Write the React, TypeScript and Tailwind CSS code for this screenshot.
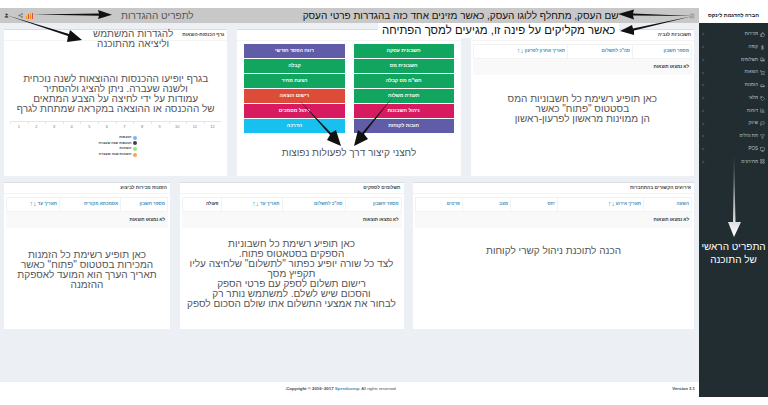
import React from 'react'
import {
  ThumbsUp,
  DollarSign,
  Truck,
  ShoppingCart,
  Car,
  Tag,
  BarChart3,
  Flag,
  Filter,
  Monitor,
  LayoutGrid,
  ChevronLeft,
  User,
  Share2,
  Menu,
} from 'lucide-react'

const menuItems = [
  { label: 'מכירות', Icon: ThumbsUp },
  { label: 'קופה', Icon: DollarSign },
  { label: 'תשלומים', Icon: Truck },
  { label: 'הוצאות', Icon: ShoppingCart },
  { label: 'הזמנות', Icon: Car },
  { label: 'מלאי', Icon: Tag },
  { label: 'דוחות', Icon: BarChart3 },
  { label: 'שיווק', Icon: Flag },
  { label: 'תת נהלים', Icon: Filter },
  { label: 'POS', Icon: Monitor },
  { label: 'מחירונים', Icon: LayoutGrid },
]

type Head = { label: string; sort?: boolean; dark?: boolean }

function DataTable({ cols, heads }: { cols: string; heads: Head[] }) {
  return (
    <div className="mx-[2px] mt-[3px]">
      <div className={`grid h-[15px] border border-[#f2f2f2] ${cols}`}>
        {heads.map((h) => (
          <div
            key={h.label}
            className={`flex items-center gap-[1px] border-l border-[#f2f2f2] px-[2px] text-[4.5px] font-bold last:border-l-0 ${h.dark ? 'text-[#333]' : 'text-[#3c8dbc]'}`}
          >
            <span>{h.label}</span>
            {h.sort && <span className="-mt-[2px] text-[7px] leading-none">↓↑</span>}
          </div>
        ))}
      </div>
      <div className="flex h-[16px] items-center bg-[#f9f9f9] px-[3px] text-[4.5px] font-bold text-[#333]">
        לא נמצאו תוצאות
      </div>
    </div>
  )
}

function Card({ title, children }: { title: string; children: React.ReactNode }) {
  return (
    <div className="h-[146.5px] overflow-hidden border-t border-[#d8dde3] bg-white">
      <div className="flex h-[11px] items-center border-b border-[#f4f4f4] px-[3px] text-[4.7px] font-bold text-[#444]">
        {title}
      </div>
      {children}
    </div>
  )
}

function Note({ className, children }: { className: string; children: React.ReactNode }) {
  return <div className={`text-center text-[10px] leading-[10px] text-[#555] ${className}`}>{children}</div>
}

const chartLegend = [
  { label: 'הכנסות', color: 'bg-[#7cb5ec]' },
  { label: 'הכנסות שנה שעברה', color: 'bg-[#434348]' },
  { label: 'הוצאות', color: 'bg-[#90ed7d]' },
  { label: 'הוצאות שנה שעברה', color: 'bg-[#f7a35c]' },
]

function ChartCard() {
  return (
    <Card title="גרף הכנסות-הוצאות">
      <Note className="mt-[33px]">
        בגרף יופיעו ההכנסות וההוצאות לשנה נוכחית
        <br />
        ולשנה שעברה. ניתן להציג ולהסתיר
        <br />
        עמודות על ידי לחיצה על הצבע המתאים
        <br />
        של ההכנסה או ההוצאה במקראה שמתחת לגרף
      </Note>
      <div dir="ltr" className="mx-[6px] mt-[7px] grid grid-cols-12 border-t border-[#e6e6e6] text-center text-[4px] text-[#777]">
        {Array.from({ length: 12 }, (_, i) => (
          <div key={i} className="relative pt-[2px]">
            <span className="absolute left-0 top-0 h-[2px] w-px bg-[#e6e6e6]" />
            {i + 1}
          </div>
        ))}
      </div>
      <div className="mt-[5px] flex flex-col gap-[0.7px] pr-[90px]">
        {chartLegend.map((item) => (
          <div key={item.label} className="flex h-[5px] items-center gap-[2px] text-[3.6px] font-bold text-[#444]">
            <span className={`h-[4px] w-[4px] rounded-full ${item.color}`} />
            <span>{item.label}</span>
          </div>
        ))}
      </div>
    </Card>
  )
}

const shortcutButtons = [
  { label: 'חשבונית עסקה', color: 'bg-[#12a55f]' },
  { label: 'רווח הפסד חודשי', color: 'bg-[#605ca8]' },
  { label: 'חשבונית מס', color: 'bg-[#12a55f]' },
  { label: 'קבלה', color: 'bg-[#12a55f]' },
  { label: 'חש"מ מס קבלה', color: 'bg-[#12a55f]' },
  { label: 'הצעת מחיר', color: 'bg-[#12a55f]' },
  { label: 'תעודת משלוח', color: 'bg-[#12a55f]' },
  { label: 'רישום הוצאה', color: 'bg-[#dd4b39]' },
  { label: 'ניהול חשבונות', color: 'bg-[#d81b60]' },
  { label: 'ניהול מסמכים', color: 'bg-[#d81b60]' },
  { label: 'חובות לקוחות', color: 'bg-[#605ca8]' },
  { label: 'הדרכה', color: 'bg-[#17c0ef]' },
]

function ShortcutsCard() {
  return (
    <Card title="">
      <div className="mx-[7px] mt-[3px] grid grid-cols-2 gap-x-[9px] gap-y-px">
        {shortcutButtons.map((b) => (
          <div key={b.label} className={`flex h-[14px] items-center justify-center text-[5px] font-bold text-white ${b.color}`}>
            {b.label}
          </div>
        ))}
      </div>
      <Note className="mt-[15px]">לחצני קיצור דרך לפעולות נפוצות</Note>
    </Card>
  )
}

function Arrows() {
  return (
    <svg className="pointer-events-none absolute left-0 top-0" width="768" height="405" viewBox="0 0 768 405">
      <defs>
        <linearGradient id="fade" x1="0" y1="0" x2="0" y2="1">
          <stop offset="0" stopColor="#fff" stopOpacity="0.2" />
          <stop offset="1" stopColor="#fff" />
        </linearGradient>
      </defs>
      {/* תפריט ההגדרות */}
      <polygon points="33,14.5 99,13.5 98,10 112,14.7 98,19 99,15.8" fill="#111" />
      {/* משתמש */}
      <polygon points="6,15 69,34 70,30 82,40 67,42 68,36" fill="#111" />
      {/* שם העסק */}
      <polygon points="693,16 633,13.5 634,9.5 618,14 634,19.5 633,15.5" fill="#111" />
      <polygon points="693,16 633,28.5 632,25 620,31 634,35 634,30.5" fill="#111" />
      {/* קיצור דרך */}
      <polygon points="299,100 331,133 336,130 341,146 327,140 330,135" fill="#111" />
      <polygon points="393,97 362,133 358,130 354,146 368,139 364,134" fill="#111" />
      {/* תפריט ראשי */}
      <polygon points="734,155 735.5,222 741,222 734,237 728,222 733,222" fill="url(#fade)" />
    </svg>
  )
}

export default function App() {
  return (
    <div dir="rtl" className="relative h-[405px] w-[768px] overflow-hidden bg-white pt-2 font-['Liberation_Sans',sans-serif]">
      <div dir="ltr" className="flex h-[389px]">
        {/* תוכן */}
        <div dir="rtl" className="flex w-[699px] flex-col bg-[#ecf0f5]">
          <div dir="ltr" className="flex h-[15px] items-center bg-[#c8c8c8] pl-[4px] pr-[4px]">
            <User size={5} className="fill-[#333] text-[#333]" />
            <Share2 size={5} className="ml-[9px] text-[#555]" />
            <div className="ml-[3px] flex h-[6px] items-end gap-px">
              <span className="h-[3px] w-[1px] bg-[#f39c12]" />
              <span className="h-[5px] w-[1px] bg-[#dd4b39]" />
              <span className="h-[6px] w-[1px] bg-[#f39c12]" />
              <span className="h-[6px] w-[1px] bg-[#dd4b39]" />
            </div>
            <span dir="rtl" className="ml-[88px] text-[10px] text-[#555]">לתפריט ההגדרות</span>
            <span dir="rtl" className="ml-[109px] text-[10px] text-[#111]">שם העסק, מתחלף ללוגו העסק, כאשר מזינים אחד כזה בהגדרות פרטי העסק</span>
            <Menu size={6} className="ml-auto text-[#666]" />
          </div>

          <div className="flex flex-1 flex-col gap-[6.5px] pl-[4px] pr-[5px] pt-[6px]">
            <div className="grid grid-cols-3 gap-[10px]">
              <Card title="חשבוניות לגביה">
                <DataTable
                  cols="grid-cols-[59px_65px_1fr]"
                  heads={[
                    { label: 'מספר חשבון' },
                    { label: 'סה"כ לתשלום' },
                    { label: 'תאריך אחרון לפרעון', sort: true },
                  ]}
                />
                <Note className="mt-[19px]">
                  כאן תופיע רשימת כל חשבוניות המס
                  <br />
                  בסטטוס "פתוח" כאשר
                  <br />
                  הן ממוינות מראשון לפרעון-ראשון
                </Note>
              </Card>
              <ShortcutsCard />
              <ChartCard />
            </div>
            <div className="grid grid-cols-[281px_224px_166px] gap-[9.5px]">
              <Card title="אירועים הקשורים בהתחברות">
                <DataTable
                  cols="grid-cols-[48px_86px_47px_48px_1fr]"
                  heads={[
                    { label: 'השעה' },
                    { label: 'תאריך אירוע', sort: true },
                    { label: 'יחס' },
                    { label: 'מצב' },
                    { label: 'פרטים' },
                  ]}
                />
                <Note className="mt-[18px]">הכנה לתוכנת ניהול קשרי לקוחות</Note>
              </Card>
              <Card title="תשלומים לספקים">
                <DataTable
                  cols="grid-cols-[56px_63px_61px_1fr]"
                  heads={[
                    { label: 'מספר חשבון' },
                    { label: 'סה"כ לתשלום' },
                    { label: 'תאריך עד', sort: true },
                    { label: 'פעולה', dark: true },
                  ]}
                />
                <Note className="mt-[11px]">
                  כאן תופיע רשימת כל חשבוניות
                  <br />
                  הספקים בסטאטוס פתוח.
                  <br />
                  לצד כל שורה יופיע כפתור "לתשלום" שלחיצה עליו
                  <br />
                  תקפיץ מסך
                  <br />
                  רישום תשלום לספק עם פרטי הספק
                  <br />
                  והסכום שיש לשלם. למשתמש נותר רק
                  <br />
                  לבחור את אמצעי התשלום אתו שולם הסכום לספק
                </Note>
              </Card>
              <Card title="הזמנות מכירות לביצוע">
                <DataTable
                  cols="grid-cols-[47px_61px_1fr]"
                  heads={[
                    { label: 'מספר חשבון' },
                    { label: 'אסמכתא מקורית' },
                    { label: 'תאריך עד', sort: true },
                  ]}
                />
                <Note className="mt-[22px]">
                  כאן תופיע רשימת כל הזמנות
                  <br />
                  המכירות בסטטוס "פתוח" כאשר
                  <br />
                  תאריך הערך הוא המועד לאספקת
                  <br />
                  ההזמנה
                </Note>
              </Card>
            </div>
          </div>

          <div dir="ltr" className="flex h-[15px] items-center bg-white pl-[285px] pr-[4px] text-[4.3px] text-[#444]">
            <span>
              <b>.Copyright © 2016–2017 <span className="text-[#3c8dbc]">Speedcomp</span>.</b> All rights reserved
            </span>
            <b className="ml-auto">Version 3.1</b>
          </div>
        </div>

        {/* תפריט ראשי */}
        <div dir="rtl" className="flex w-[69px] flex-col bg-[#222d32]">
          <div className="flex h-[15px] items-center justify-center bg-white text-[5.4px] font-bold text-[#222]">
            חברה להדגמת לינקס
          </div>
          <div className="mt-[5px] flex flex-col">
            {menuItems.map(({ label, Icon }) => (
              <div key={label} className="flex h-[12.75px] items-center gap-[2px] pl-[2px] pr-[3px] text-[4.5px] text-[#b8c7ce]">
                <Icon size={5} />
                <span>{label}</span>
                <ChevronLeft size={4} className="mr-auto" />
              </div>
            ))}
          </div>
          <div className="mt-[72px] text-center text-[10px] leading-[13px] text-white">
            התפריט הראשי
            <br />
            של התוכנה
          </div>
        </div>
      </div>

      {/* כיתובי הסבר מעל המסך */}
      <div className="absolute left-[378px] top-[23px] bg-white px-[4px] text-[11.4px] leading-[15px] text-[#111]">
        כאשר מקליקים על פינה זו, מגיעים למסך הפתיחה
      </div>
      <div className="absolute left-[93px] top-[29px] text-center text-[10px] leading-[10px] text-[#555]">
        להגדרות המשתמש
        <br />
        וליציאה מהתוכנה
      </div>
      <Arrows />
    </div>
  )
}
